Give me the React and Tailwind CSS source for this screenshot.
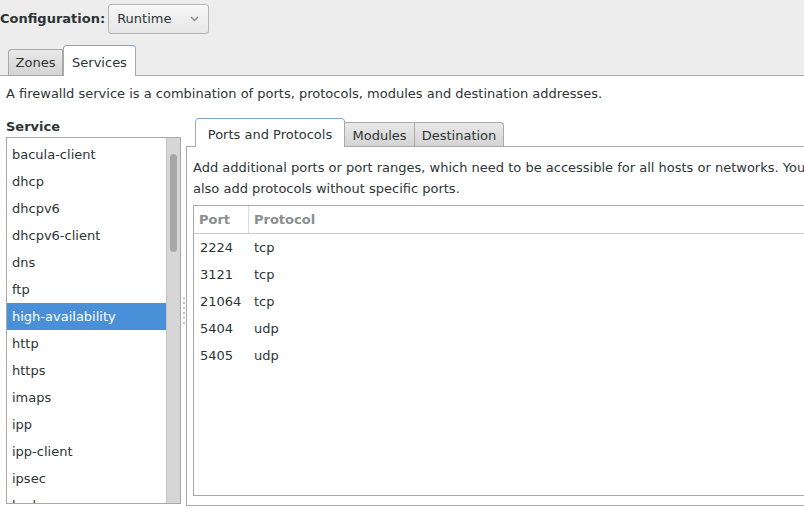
import React from 'react';

const services = [
  'bacula-client', 'dhcp', 'dhcpv6', 'dhcpv6-client', 'dns', 'ftp',
  'high-availability', 'http', 'https', 'imaps', 'ipp', 'ipp-client', 'ipsec', 'kerberos',
];

const ports = [
  { port: '2224', proto: 'tcp' },
  { port: '3121', proto: 'tcp' },
  { port: '21064', proto: 'tcp' },
  { port: '5404', proto: 'udp' },
  { port: '5405', proto: 'udp' },
];

// Top toolbar with the configuration combo
const ConfigBar = () => (
  <div className="flex items-center h-[37px]">
    <span className="font-bold">Configuration:</span>
    <div className="ml-[3px] w-[101px] h-[30px] flex items-center justify-between pl-[8px] pr-[9px] border border-[#b6b6b3] rounded-[3px] bg-gradient-to-b from-[#f7f7f7] to-[#e6e6e6]">
      <span>Runtime</span>
      <svg width="9" height="6" viewBox="0 0 9 6">
        <path d="M1 1 L4.5 4.5 L8 1" fill="none" stroke="#8a8a8a" strokeWidth="1.5" />
      </svg>
    </div>
  </div>
);

const MainTabs = () => (
  <div className="flex items-end pl-[8px] h-[38px]">
    <div className="h-[26px] w-[55px] flex items-center justify-center border border-b-0 border-[#a8a8a8] rounded-tl-[4px] bg-gradient-to-b from-[#e8e8e8] to-[#d4d4d4]">
      Zones
    </div>
    <div className="h-[31px] w-[73px] -mb-px pt-[3px] flex items-center justify-center border border-b-0 border-[#a8a8a8] border-t-[#7ea5cf] rounded-t-[4px] bg-white">
      Services
    </div>
  </div>
);

const ServiceList = () => (
  <div className="flex flex-col w-[175px]">
    <div className="h-[19px] font-bold leading-[19px]">Service</div>
    <div className="h-[367px] mt-[1px] flex border border-[#a8a8a8] bg-white overflow-hidden">
      <div className="flex-1 pt-[3px]">
        {services.map((s, i) => (
          <div
            key={s}
            className={`h-[27px] flex items-center pl-[5px] ${i === 6 ? 'bg-[#4a90d9] text-white' : ''}`}
          >
            {s}
          </div>
        ))}
      </div>
      <div className="w-[14px] bg-[#d6d6d6] border-l border-[#c4c4c4] pt-[16px] flex justify-center">
        <div className="w-[7px] h-[98px] rounded-full bg-[#a7a7a7]" />
      </div>
    </div>
  </div>
);

const PaneHandle = () => (
  <div className="w-[5px] flex flex-col items-center pt-[180px] gap-[3px]">
    {[0, 1, 2, 3, 4, 5].map((d) => (
      <div key={d} className="w-[2px] h-[2px] bg-[#c4c4c4]" />
    ))}
  </div>
);

const PortsPane = () => (
  <div className="flex-1 flex flex-col min-w-0">
    <div className="flex items-end pl-[9px] h-[29px]">
      <div className="h-[29px] w-[150px] -mb-px pt-[4px] flex items-center justify-center border border-b-0 border-[#a8a8a8] border-t-[#7ea5cf] rounded-t-[4px] bg-white relative z-10">
        Ports and Protocols
      </div>
      <div className="h-[24px] w-[70px] pt-[3px] flex items-center justify-center border border-l-0 border-b-0 border-[#a8a8a8] bg-gradient-to-b from-[#e8e8e8] to-[#d4d4d4]">
        Modules
      </div>
      <div className="h-[24px] w-[89px] pt-[3px] flex items-center justify-center border border-l-0 border-b-0 border-[#a8a8a8] rounded-tr-[4px] bg-gradient-to-b from-[#e8e8e8] to-[#d4d4d4]">
        Destination
      </div>
    </div>
    <div className="h-[360px] border border-r-0 border-[#a8a8a8] bg-white pl-[6px] pt-[10px] overflow-hidden">
      <p className="leading-[21px] whitespace-nowrap">
        Add additional ports or port ranges, which need to be accessible for all hosts or networks. You can
        <br />
        also add protocols without specific ports.
      </p>
      <div className="mt-[6px] h-[291px] border border-r-0 border-[#a8a8a8]">
        <div className="h-[28px] flex items-center border-b border-[#c8c8c8] font-bold text-[#8b8e8f]">
          <div className="w-[54px] pl-[5px]">Port</div>
          <div className="h-full border-l border-[#dcdcdc] pl-[5px] flex items-center">Protocol</div>
        </div>
        {ports.map((p) => (
          <div key={p.port} className="h-[27px] flex items-center">
            <div className="w-[54px] pl-[6px]">{p.port}</div>
            <div className="pl-[6px]">{p.proto}</div>
          </div>
        ))}
      </div>
    </div>
  </div>
);

export default function App() {
  return (
    <div
      className="w-[804px] h-[509px] overflow-hidden bg-white text-[13px] text-[#2e3436]"
      style={{ fontFamily: '"DejaVu Sans", sans-serif' }}
    >
      <div className="bg-[#ededed] border-b border-[#a8a8a8]">
        <ConfigBar />
        <MainTabs />
      </div>
      <div className="px-[6px]">
        <div className="h-[38px] flex items-center pb-[3px]">
          A firewalld service is a combination of ports, protocols, modules and destination addresses.
        </div>
        <div className="flex mt-[3px] -mr-[6px]">
          <ServiceList />
          <PaneHandle />
          <PortsPane />
        </div>
      </div>
    </div>
  );
}
